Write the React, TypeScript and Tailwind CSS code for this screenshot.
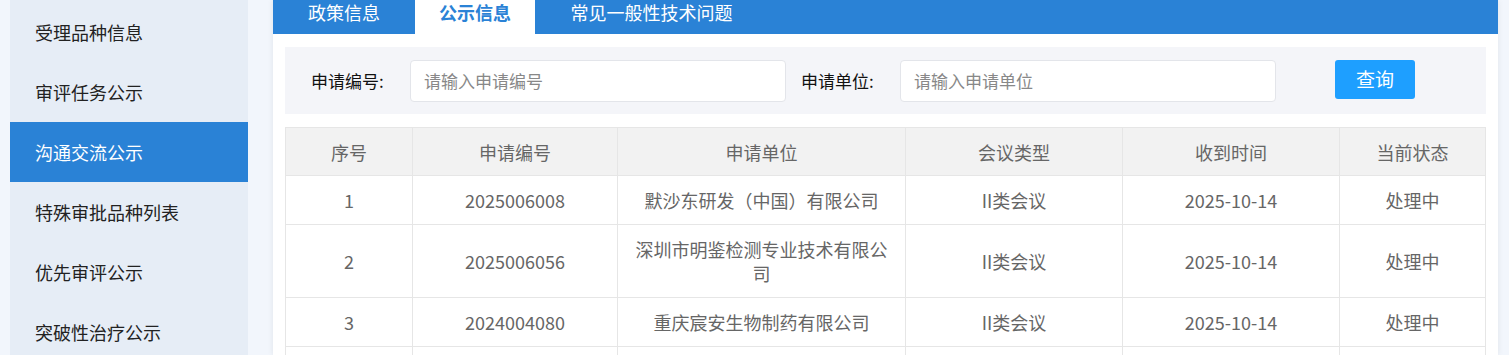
import React from "react";

const menu = [
  "受理品种信息",
  "审评任务公示",
  "沟通交流公示",
  "特殊审批品种列表",
  "优先审评公示",
  "突破性治疗公示",
];

const tabs = [
  { label: "政策信息", width: "w-[142px]" },
  { label: "公示信息", width: "w-[120px]", active: true },
  { label: "常见一般性技术问题", width: "w-[233px]" },
];

const rows = [
  { no: "1", code: "2025006008", unit: "默沙东研发（中国）有限公司", type: "II类会议", date: "2025-10-14", status: "处理中" },
  { no: "2", code: "2025006056", unit: "深圳市明鉴检测专业技术有限公司", type: "II类会议", date: "2025-10-14", status: "处理中" },
  { no: "3", code: "2024004080", unit: "重庆宸安生物制药有限公司", type: "II类会议", date: "2025-10-14", status: "处理中" },
  // next row is below the fold, only its top border shows
  { no: "\u00a0", code: "", unit: "", type: "", date: "", status: "" },
];

const cols = ["w-[127px]", "w-[205px]", "w-[288px]", "w-[217px]", "w-[217px]", "w-[146px]"];
const heads = ["序号", "申请编号", "申请单位", "会议类型", "收到时间", "当前状态"];

export default function App() {
  return (
    <div
      className="h-[355px] overflow-hidden bg-[#f2f6fc] flex"
      style={{ fontFamily: '"Noto Sans CJK SC", "Noto Sans", sans-serif' }}
    >
      {/* Sidebar */}
      <aside className="ml-[10px] w-[238px] shrink-0 bg-[#e6edf6] pt-[2px]">
        {menu.map((m) => (
          <div
            key={m}
            className={
              m === "沟通交流公示"
                ? "h-[60px] flex items-center pl-[25px] text-[18px] bg-[#2a82d6] text-white"
                : "h-[60px] flex items-center pl-[25px] text-[18px] text-[#222]"
            }
          >
            {m}
          </div>
        ))}
      </aside>

      {/* Main panel */}
      <main className="ml-[25px] w-[1225px] shrink-0 bg-white shadow-[0_0_6px_rgba(0,0,0,0.08)]">
        <div className="h-[34px] bg-[#2a82d6] flex">
          {tabs.map((t) => (
            <div
              key={t.label}
              className={
                t.active
                  ? `${t.width} h-[34px] bg-white text-[#2a82d6] font-bold text-[18px] leading-[24px] text-center`
                  : `${t.width} h-[34px] text-white text-[18px] leading-[24px] text-center`
              }
            >
              {t.label}
            </div>
          ))}
        </div>

        <div className="px-[12px] pt-[13px]">
          {/* Search */}
          <div className="h-[67px] bg-[#f4f5f9] flex items-center pl-[26px] text-[17px] text-[#111]">
            <label className="w-[99px] shrink-0">申请编号:</label>
            <input
              className="w-[376px] h-[42px] shrink-0 rounded-[4px] border border-[#e3e5ea] bg-white px-[13px] text-[17px] outline-none placeholder:text-[#888]"
              placeholder="请输入申请编号"
            />
            <label className="ml-[15px] w-[99px] shrink-0">申请单位:</label>
            <input
              className="w-[376px] h-[42px] shrink-0 rounded-[4px] border border-[#e3e5ea] bg-white px-[13px] text-[17px] outline-none placeholder:text-[#888]"
              placeholder="请输入申请单位"
            />
            <button className="ml-[59px] -mt-[3px] w-[80px] h-[39px] rounded-[3px] bg-[#1e9fff] text-white text-[19px]">
              查询
            </button>
          </div>

          {/* Table */}
          <table className="mt-[13px] w-[1200px] border-collapse table-fixed text-[18px] text-[#666] text-center">
            <colgroup>
              {cols.map((c, i) => (
                <col key={i} className={c} />
              ))}
            </colgroup>
            <thead>
              <tr className="bg-[#f2f2f2]">
                {heads.map((h) => (
                  <th key={h} className="border border-[#e6e6e6] font-normal leading-[24px] pt-[12px] pb-[11px] px-[10px]">
                    {h}
                  </th>
                ))}
              </tr>
            </thead>
            <tbody>
              {rows.map((r, i) => (
                <tr key={i}>
                  <td className="border border-[#e6e6e6] leading-[24px] py-[12px] px-[10px]">{r.no}</td>
                  <td className="border border-[#e6e6e6] leading-[24px] py-[12px] px-[10px]">{r.code}</td>
                  <td className="border border-[#e6e6e6] leading-[24px] py-[12px] px-[10px]">{r.unit}</td>
                  <td className="border border-[#e6e6e6] leading-[24px] py-[12px] px-[10px]">{r.type}</td>
                  <td className="border border-[#e6e6e6] leading-[24px] py-[12px] px-[10px]">{r.date}</td>
                  <td className="border border-[#e6e6e6] leading-[24px] py-[12px] px-[10px]">{r.status}</td>
                </tr>
              ))}
            </tbody>
          </table>
        </div>
      </main>
    </div>
  );
}
